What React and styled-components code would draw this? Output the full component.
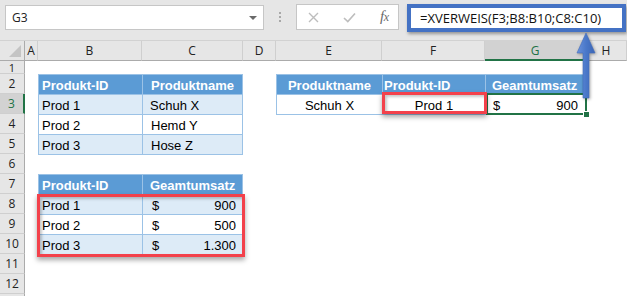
import React from 'react';
import styled, { createGlobalStyle } from 'styled-components';

const GlobalStyle = createGlobalStyle`
  html, body { margin: 0; padding: 0; background: #fff; }
  body { width: 627px; height: 296px; overflow: hidden; }
`;

const Window = styled.div`
  position: relative;
  width: 627px;
  height: 296px;
  overflow: hidden;
  background: #fff;
  font-family: "Liberation Sans", Arial, sans-serif;
`;

const FormulaBar = styled.div`
  display: flex;
  align-items: flex-start;
  height: 40px;
  box-sizing: border-box;
  padding: 4px 1px 0 5px;
  background: #e6e6e6;
`;

const NameBox = styled.div`
  display: flex;
  align-items: center;
  justify-content: space-between;
  box-sizing: border-box;
  width: 259px;
  height: 25px;
  margin-top: 1px;
  padding: 0 6px 0 6px;
  background: #fff;
  border: 1px solid #c6c6c6;
  font: 12px "Open Sans", sans-serif;
  color: #222;
`;

const DropArrow = styled.span`
  width: 0;
  height: 0;
  border-left: 4px solid transparent;
  border-right: 4px solid transparent;
  border-top: 4px solid #6a6a6a;
`;

const Grip = styled.div`
  display: flex;
  flex-direction: column;
  align-items: center;
  justify-content: center;
  gap: 2px;
  width: 32px;
  height: 26px;
`;

const GripDot = styled.span`
  width: 2px;
  height: 2px;
  background: #a8a8a8;
`;

const FxGroup = styled.div`
  display: flex;
  align-items: center;
  box-sizing: border-box;
  width: 103px;
  height: 26px;
  padding-left: 11px;
  gap: 24px;
  background: #fff;
  border: 1px solid #c6c6c6;
`;

const FxLabel = styled.span`
  font-family: "Liberation Serif", "Times New Roman", serif;
  font-style: italic;
  font-size: 15px;
  color: #6a6a6a;
  letter-spacing: -0.5px;
  margin-top: -2px;
`;

const FxSub = styled.span`
  font-size: 12px;
`;

const FormulaInput = styled.div`
  display: flex;
  align-items: center;
  flex: 1;
  box-sizing: border-box;
  height: 28px;
  margin-left: 8px;
  padding-left: 9px;
  background: #fff;
  border: 4px solid #4472c4;
  box-shadow: 1px 2px 3px rgba(0, 0, 0, 0.35);
  font: 13px "Open Sans", sans-serif;
  color: #111;
  white-space: nowrap;
`;

const Sheet = styled.div`
  display: grid;
  grid-template-columns: 25px 13px 104px 101px 33px 106px 103px 101px 1fr;
  grid-template-rows: 20px 13px repeat(12, 20px);
  border-top: 1px solid #d2d2d2;
  background: #fff;
`;

const Corner = styled.div`
  grid-column: 1;
  grid-row: 1;
  display: flex;
  align-items: flex-end;
  justify-content: flex-end;
  box-sizing: border-box;
  padding: 0 3px 3px 0;
  background: #e6e6e6;
  border-right: 1px solid #ababab;
  border-bottom: 1px solid #ababab;
`;

const ColHeader = styled.div`
  grid-column: ${p => p.$col};
  grid-row: 1;
  display: flex;
  align-items: center;
  justify-content: center;
  box-sizing: border-box;
  background: ${p => (p.$sel ? '#d2d2d2' : '#e6e6e6')};
  border-right: 1px solid #cfcfcf;
  border-bottom: ${p => (p.$sel ? '2px solid #217346' : '1px solid #ababab')};
  color: ${p => (p.$sel ? '#217346' : '#222')};
  font: 12px "Open Sans", sans-serif;
`;

const RowHeader = styled.div`
  grid-column: 1;
  grid-row: ${p => p.$row};
  display: flex;
  align-items: center;
  justify-content: center;
  box-sizing: border-box;
  background: ${p => (p.$sel ? '#d2d2d2' : '#e6e6e6')};
  border-bottom: 1px solid #cfcfcf;
  border-right: ${p => (p.$sel ? '2px solid #217346' : '1px solid #ababab')};
  color: ${p => (p.$sel ? '#217346' : '#222')};
  font: ${p => (p.$short ? '11px/11px' : '12px/12px')} "Open Sans", sans-serif;
`;

const Table = styled.div`
  grid-column: ${p => p.$col};
  grid-row: ${p => p.$row};
  align-self: start;
  display: grid;
  grid-template-columns: ${p => p.$cols};
  grid-auto-rows: 19px;
  gap: 1px;
  padding: 1px;
  background: #9bc2e6;
  z-index: 1;
`;

const TCell = styled.div`
  display: flex;
  align-items: center;
  justify-content: ${p =>
    p.$align === 'center' ? 'center' : p.$align === 'split' ? 'space-between' : p.$align === 'right' ? 'flex-end' : 'flex-start'};
  padding: 1px ${p => p.$pr ?? 3}px 0 ${p => p.$pl ?? 3}px;
  background: ${p => (p.$kind === 'head' ? '#5b9bd5' : p.$kind === 'band' ? '#ddebf7' : '#fff')};
  color: ${p => (p.$kind === 'head' ? '#fff' : '#000')};
  font-weight: ${p => (p.$kind === 'head' ? 700 : 400)};
  font-size: 13px;
  white-space: nowrap;
  overflow: hidden;
`;

const Highlight = styled.div`
  grid-column: ${p => p.$col};
  grid-row: ${p => p.$row};
  margin: ${p => p.$m};
  border: 3px solid #f3414b;
  box-shadow: 0 3px 5px rgba(0, 0, 0, 0.35), inset 2px 2px 3px rgba(0, 0, 0, 0.22);
  z-index: 4;
  pointer-events: none;
`;

const Selection = styled.div`
  grid-column: 8;
  grid-row: 4;
  position: relative;
  margin: -1px -1px -1px 1px;
  border: 2px solid #217346;
  z-index: 3;
  pointer-events: none;
`;

const FillHandle = styled.span`
  position: absolute;
  right: -5px;
  bottom: -5px;
  width: 5px;
  height: 5px;
  background: #217346;
  border: 1px solid #fff;
`;

const Arrow = styled.svg`
  position: absolute;
  left: 576px;
  top: 31px;
  z-index: 5;
  filter: drop-shadow(1px 1px 1.5px rgba(0, 0, 0, 0.35));
`;

const columns = ['A', 'B', 'C', 'D', 'E', 'F', 'G', 'H'];
const rows = [1, 2, 3, 4, 5, 6, 7, 8, 9, 10, 11, 12, 13];

const XIcon = () => (
  <svg width="11" height="11" viewBox="0 0 11 11">
    <path d="M1 1 L10 10 M10 1 L1 10" stroke="#bdbdbd" strokeWidth="1.4" fill="none" />
  </svg>
);

const CheckIcon = () => (
  <svg width="13" height="11" viewBox="0 0 13 11">
    <path d="M1 6 L4.8 9.6 L12 1.5" stroke="#bdbdbd" strokeWidth="1.6" fill="none" />
  </svg>
);

const CornerMark = () => (
  <svg width="12" height="12" viewBox="0 0 12 12">
    <polygon points="12,0 12,12 0,12" fill="#c4c4c4" />
  </svg>
);

export default function App() {
  return (
    <Window>
      <GlobalStyle />
      <FormulaBar>
        <NameBox>
          <span>G3</span>
          <DropArrow />
        </NameBox>
        <Grip>
          <GripDot />
          <GripDot />
          <GripDot />
        </Grip>
        <FxGroup>
          <XIcon />
          <CheckIcon />
          <FxLabel>
            f<FxSub>x</FxSub>
          </FxLabel>
        </FxGroup>
        <FormulaInput>=XVERWEIS(F3;B8:B10;C8:C10)</FormulaInput>
      </FormulaBar>

      <Sheet>
        <Corner>
          <CornerMark />
        </Corner>
        {columns.map((c, i) => (
          <ColHeader key={c} $col={i + 2} $sel={c === 'G'}>
            {c}
          </ColHeader>
        ))}
        {rows.map(r => (
          <RowHeader key={r} $row={r + 1} $sel={r === 3} $short={r === 1}>
            {r < 13 ? r : ''}
          </RowHeader>
        ))}

        <Table $col="3 / 5" $row="3 / 7" $cols="103px 1fr">
          <TCell $kind="head">Produkt-ID</TCell>
          <TCell $kind="head" $pl={8}>Produktname</TCell>
          <TCell $kind="band">Prod 1</TCell>
          <TCell $kind="band" $pl={7}>Schuh X</TCell>
          <TCell>Prod 2</TCell>
          <TCell $pl={8}>Hemd Y</TCell>
          <TCell $kind="band">Prod 3</TCell>
          <TCell $kind="band" $pl={8}>Hose Z</TCell>
        </Table>

        <Table $col="3 / 5" $row="8 / 12" $cols="103px 1fr">
          <TCell $kind="head">Produkt-ID</TCell>
          <TCell $kind="head" $pl={7}>Geamtumsatz</TCell>
          <TCell $kind="band">Prod 1</TCell>
          <TCell $kind="band" $align="split" $pl={9} $pr={6}><span>$</span><span>900</span></TCell>
          <TCell>Prod 2</TCell>
          <TCell $align="split" $pl={9} $pr={6}><span>$</span><span>500</span></TCell>
          <TCell $kind="band">Prod 3</TCell>
          <TCell $kind="band" $align="split" $pl={9} $pr={6}><span>$</span><span>1.300</span></TCell>
        </Table>

        <Table $col="6 / 9" $row="3 / 5" $cols="105px 102px 1fr">
          <TCell $kind="head" $align="center">Produktname</TCell>
          <TCell $kind="head" $pl={1}>Produkt-ID</TCell>
          <TCell $kind="head" $pl={6}>Geamtumsatz</TCell>
          <TCell $align="center">Schuh X</TCell>
          <TCell $align="center">Prod 1</TCell>
          <TCell $align="split" $pl={7} $pr={7}><span>$</span><span>900</span></TCell>
        </Table>

        <Selection>
          <FillHandle />
        </Selection>
        <Highlight $col="7" $row="4" $m="-2px -2px 0 0" />
        <Highlight $col="3 / 5" $row="9 / 12" $m="0 -2px -3px -1px" />
      </Sheet>

      <Arrow width="20" height="70" viewBox="0 0 20 70">
        <defs>
          <linearGradient id="arrowFill" x1="0" y1="0" x2="1" y2="0">
            <stop offset="0" stopColor="#6a93dd" />
            <stop offset="0.5" stopColor="#4a78c9" />
            <stop offset="1" stopColor="#3c66b5" />
          </linearGradient>
        </defs>
        <polygon
          points="10,2 19,22 13,22 13,67 7,67 7,22 1,22"
          fill="url(#arrowFill)"
          stroke="#3f6bbd"
          strokeWidth="0.6"
        />
      </Arrow>
    </Window>
  );
}
